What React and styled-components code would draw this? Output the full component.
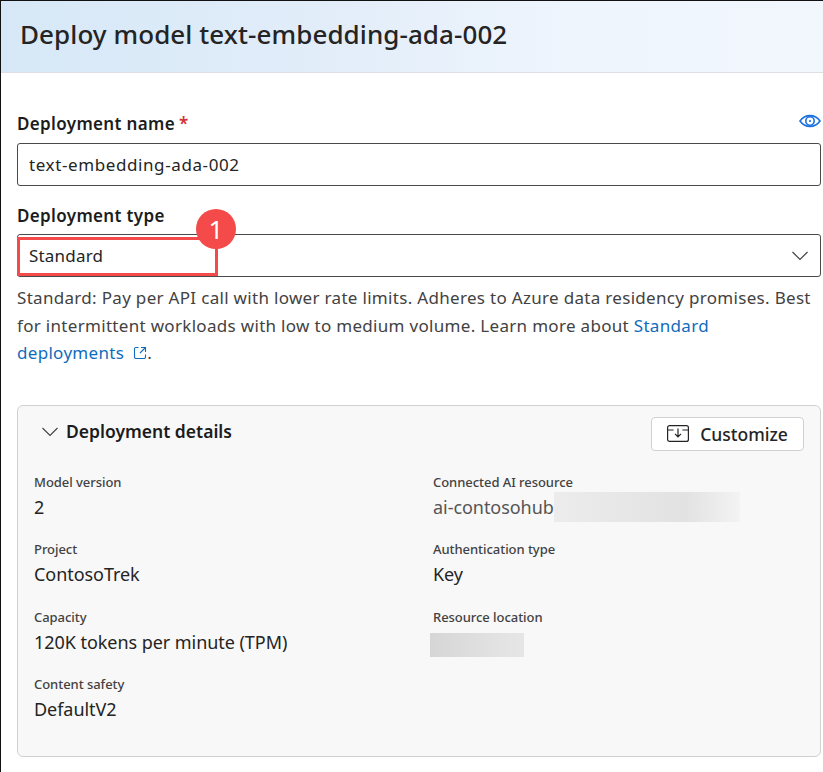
import React from 'react';
import styled, { createGlobalStyle } from 'styled-components';

const Global = createGlobalStyle`
html, body { margin: 0; padding: 0; background: #fff; }
body { font-family: "Noto Sans", "Open Sans", sans-serif; color: #242424; }
`;

const Page = styled.div`
width: 823px;
height: 772px;
box-sizing: border-box;
border-top: 1px solid #111;
border-left: 1px solid #111;
overflow: hidden;
`;

const Header = styled.header`
height: 72px;
box-sizing: border-box;
padding: 0 0 6px 19px;
display: flex;
align-items: center;
background: linear-gradient(90deg, #d6e8f7 0%, #e2edf9 40%, #eff5fd 70%, #f2f7fe 100%);
border-bottom: 1px solid #dcdfe3;
`;

const Title = styled.h1`
margin: 0;
font-size: 26px;
font-weight: 500;
color: #242424;
letter-spacing: 0.08px;
`;

const Body = styled.main`
padding: 0 2px 0 16px;
`;

const FieldHead = styled.div`
display: flex;
justify-content: space-between;
align-items: center;
height: 22px;
margin-top: ${p => p.$top}px;
`;

const Label = styled.label`
font-size: 17px;
font-weight: 600;
color: #1c1c1c;
letter-spacing: 0.35px;
`;

const Required = styled.span`
color: #d13438;
margin-left: 4px;
`;

const Eye = styled.svg`
width: 22px;
height: 14px;
margin-top: -4px;
`;

const Input = styled.div`
position: relative;
margin-top: ${p => p.$top}px;
height: 43px;
box-sizing: border-box;
padding: 0 11px;
display: flex;
align-items: center;
justify-content: space-between;
border: 1px solid #4a4a4a;
border-radius: 3px;
font-size: 17px;
letter-spacing: ${p => p.$spacing}px;
background: #fff;
`;

const Highlight = styled.div`
position: absolute;
left: -1px;
top: 2px;
width: 201px;
height: 39px;
border: 3px solid #f44a4a;
box-sizing: border-box;
`;

const Badge = styled.div`
position: absolute;
left: 178px;
top: -26px;
width: 40px;
height: 40px;
border-radius: 50%;
background: #f44a4a;
color: #fff;
font-size: 26px;
display: flex;
align-items: center;
justify-content: center;
`;

const Chevron = styled.svg`
width: ${p => p.$size}px;
height: ${p => p.$size}px;
flex: none;
`;

const Help = styled.p`
margin: 7px 0 0;
font-size: 17px;
line-height: 27.5px;
color: #424242;
letter-spacing: 0.31px;
`;

const Link = styled.a`
color: #0f6cbd;
text-decoration: none;
`;

const External = styled.svg`
width: 14px;
height: 14px;
margin: 0 0 0 9px;
vertical-align: -1px;
`;

const Card = styled.section`
margin-top: 38px;
height: 352px;
box-sizing: border-box;
background: #f8f8f8;
border: 1px solid #d1d1d1;
border-radius: 6px;
padding: 11px 16px 0 16px;
`;

const CardHead = styled.div`
display: flex;
justify-content: space-between;
align-items: flex-start;
`;

const CardTitle = styled.div`
display: flex;
align-items: center;
gap: 7px;
padding: 2px 0 0 7px;
font-size: 17.5px;
font-weight: 600;
color: #1c1c1c;
`;

const Button = styled.button`
width: 153px;
height: 34px;
display: flex;
align-items: center;
justify-content: center;
gap: 11px;
background: #fff;
border: 1px solid #d1d1d1;
border-radius: 4px;
font: 500 17.5px "Noto Sans", sans-serif;
color: #242424;
padding: 0;
`;

const Grid = styled.div`
display: grid;
grid-template-columns: 399px 1fr;
grid-auto-rows: 67.5px;
margin-top: 22px;
`;

const Item = styled.div`
display: flex;
flex-direction: column;
`;

const ItemLabel = styled.span`
font-size: 13px;
line-height: 18px;
font-weight: 500;
color: #424242;
letter-spacing: -0.05px;
`;

const ItemValue = styled.span`
display: flex;
align-items: center;
font-size: 18px;
line-height: 32px;
color: ${p => (p.$muted ? '#555' : '#242424')};
letter-spacing: -0.05px;
`;

const Redacted = styled.span`
display: block;
width: ${p => p.$w}px;
height: ${p => p.$h}px;
margin-left: ${p => p.$left || 0}px;
margin-top: ${p => p.$top || 0}px;
background: linear-gradient(90deg, ${p => p.$from} 0%, #e2e2e2 70%, ${p => p.$to} 100%);
`;

const details = [
  { label: 'Model version', value: '2' },
  { label: 'Connected AI resource', value: 'ai-contosohub', muted: true, redact: { w: 186, h: 30, from: '#ececec', to: '#f3f3f3' } },
  { label: 'Project', value: 'ContosoTrek' },
  { label: 'Authentication type', value: 'Key' },
  { label: 'Capacity', value: '120K tokens per minute (TPM)' },
  { label: 'Resource location', redact: { w: 94, h: 24, left: -3, top: 7, from: '#d6d6d6', to: '#e6e6e6' } },
  { label: 'Content safety', value: 'DefaultV2' },
];

export default function App() {
  return (
    <Page>
      <Global />
      <Header>
        <Title>Deploy model text-embedding-ada-002</Title>
      </Header>
      <Body>
        <FieldHead $top={39}>
          <Label>Deployment name<Required>*</Required></Label>
          <Eye viewBox="0 0 22 14" fill="none" stroke="#1a6fe0" strokeWidth="1.6">
            <path d="M1 7c2.5-3.6 5.8-5.4 10-5.4S18.500 3.400 21 7c-2.500 3.600-5.800 5.400-10 5.400S3.500 10.600 1 7z" />
            <circle cx="11" cy="7" r="4.2" />
            <circle cx="11" cy="7" r="1.1" fill="#1a6fe0" stroke="none" />
          </Eye>
        </FieldHead>
        <Input $top={9} $spacing={0.6}>text-embedding-ada-002</Input>
        <FieldHead $top={18}>
          <Label>Deployment type</Label>
        </FieldHead>
        <Input $top={8} $spacing={0.2}>
          Standard
          <Chevron $size={18} viewBox="0 0 18 18" fill="none" stroke="#424242" strokeWidth="1.2">
            <path d="M1.500 5l7.500 7.500L16.500 5" />
          </Chevron>
          <Highlight />
          <Badge>1</Badge>
        </Input>
        <Help>
          Standard: Pay per API call with lower rate limits. Adheres to Azure data residency promises. Best
          for intermittent workloads with low to medium volume. Learn more about <Link>Standard<br />deployments
            <External viewBox="0 0 14 14" fill="none" stroke="#0f6cbd" strokeWidth="1.100">
              <path d="M5.500 1.500H3a1.500 1.500 0 0 0-1.500 1.500v8A1.500 1.500 0 0 0 3 12.500h8a1.500 1.500 0 0 0 1.500-1.500V8.500" />
              <path d="M8 1.500h4.500V6M12.500 1.500L7 7" />
            </External></Link>.
        </Help>
        <Card>
          <CardHead>
            <CardTitle>
              <Chevron $size={18} viewBox="0 0 18 18" fill="none" stroke="#424242" strokeWidth="1.100">
                <path d="M1.500 6l7.500 7.500L16.500 6" />
              </Chevron>
              Deployment details
            </CardTitle>
            <Button>
              <svg width="22" height="17" viewBox="0 0 22 17" fill="none" stroke="#242424" strokeWidth="1.200">
                <rect x="0.600" y="0.600" width="20.800" height="15.800" rx="2" />
                <path d="M0.600 5h6M15.400 5h6M11 3.500v8M8 8.800l3 3 3-3" />
              </svg>
              Customize
            </Button>
          </CardHead>
          <Grid>
            {details.map(d => (
              <Item key={d.label}>
                <ItemLabel>{d.label}</ItemLabel>
                <ItemValue $muted={d.muted}>
                  {d.value}
                  {d.redact && (
                    <Redacted $w={d.redact.w} $h={d.redact.h} $left={d.redact.left} $top={d.redact.top} $from={d.redact.from} $to={d.redact.to} />
                  )}
                </ItemValue>
              </Item>
            ))}
          </Grid>
        </Card>
      </Body>
    </Page>
  );
}
